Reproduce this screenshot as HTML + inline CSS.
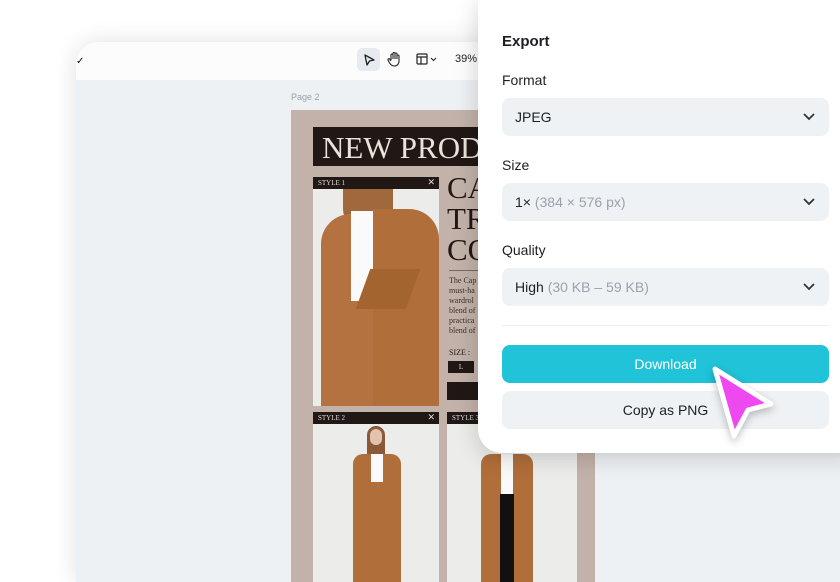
<!DOCTYPE html>
<html><head><style>
*{margin:0;padding:0;box-sizing:border-box}
body{width:840px;height:560px;overflow:hidden;background:#fff;font-family:"Liberation Sans",sans-serif;position:relative}
.win{position:absolute;left:76px;top:42px;width:800px;height:540px;border-radius:22px 0 0 0;background:#eef1f4;box-shadow:0 0 24px rgba(0,0,0,.12);overflow:hidden}
.tb{position:absolute;left:0;top:0;right:0;height:38px;background:#fcfcfc}
.serif{font-family:"Liberation Serif",serif}
.page{position:absolute;left:215px;top:68px;width:304px;height:480px;background:#c2b2a9}
.blk{position:absolute;background:#211815}
.ph{position:absolute;background:#ececea;overflow:hidden}
.panel{position:absolute;left:478px;top:0;width:380px;height:453px;background:#fff;border-radius:0 0 0 24px;box-shadow:0 4px 24px rgba(0,0,0,.18)}
.lbl{position:absolute;left:24px;font-size:14px;color:#1d1f24}
.sel{position:absolute;left:24px;width:327px;height:38px;border-radius:8px;background:#eff2f5;font-size:14px;color:#1d1f24;padding:11px 0 0 13px}
.sel i{font-style:normal;color:#9aa2ad}
.chev{position:absolute;right:14px;top:15px}
.btn{position:absolute;left:24px;width:327px;height:38px;border-radius:8px;font-size:14px;text-align:center;line-height:38px}
</style></head><body>
<div class="win">
 <div class="tb">
  <div style="position:absolute;left:0;top:14px;font-size:10px">✓</div>
  <div style="position:absolute;left:281px;top:6px;width:23px;height:23px;border-radius:5px;background:#e7eaee"></div>
  <svg style="position:absolute;left:286px;top:11px" width="14" height="14" viewBox="0 0 14 14"><path d="M3 2 L12 7 L7.5 8 L5 12 Z" fill="none" stroke="#222" stroke-width="1.3" stroke-linejoin="round"/></svg>
  <svg style="position:absolute;left:311px;top:9px" width="14" height="16" viewBox="0 0 14 16"><path d="M4 9V4a1 1 0 012 0V8M6 8V2.5a1 1 0 012 0V8M8 8V3a1 1 0 012 0v5M10 8V5a1 1 0 012 0v5c0 3-2 5-4.5 5S3 13 2 11l-1-2a1 1 0 012-.5L4 10" fill="none" stroke="#222" stroke-width="1.1"/></svg>
  <svg style="position:absolute;left:340px;top:11px" width="24" height="13" viewBox="0 0 24 13"><rect x="1" y="1" width="10" height="10" rx="1" fill="none" stroke="#222" stroke-width="1.2"/><path d="M1 4H11M5 4V11" stroke="#222" stroke-width="1.2"/><path d="M15 5l2.5 2.5L20 5" fill="none" stroke="#222" stroke-width="1.1"/></svg>
  <div style="position:absolute;left:379px;top:11px;font-size:11px;color:#222">39%</div>
 </div>
 <div style="position:absolute;left:215px;top:50px;font-size:9px;color:#9aa2ad">Page 2</div>
 <div class="page">
  <div class="blk" style="left:22px;top:17px;width:290px;height:39px"><div class="serif" style="color:#ebe2dc;font-size:31px;padding:3px 0 0 9px;white-space:nowrap">NEW PRODUCT</div></div>
  <div class="blk" style="left:22px;top:67px;width:126px;height:12px"><span class="serif" style="color:#ddd;font-size:7px;position:absolute;left:5px;top:2px">STYLE 1</span><span style="color:#ddd;font-size:9px;position:absolute;right:4px;top:0">✕</span></div>
  <div class="ph" style="left:22px;top:79px;width:126px;height:217px">
   <div style="position:absolute;left:30px;top:-5px;width:50px;height:45px;background:#a0683c;border-radius:0 0 20px 20px"></div>
   <div style="position:absolute;left:8px;top:25px;width:60px;height:200px;background:#b3723f;border-radius:30px 0 0 0"></div>
   <div style="position:absolute;left:60px;top:20px;width:66px;height:200px;background:#b06e3a;border-radius:0 30px 0 0"></div>
   <div style="position:absolute;left:38px;top:22px;width:22px;height:90px;background:#fafafa"></div>
   <div style="position:absolute;left:50px;top:80px;width:50px;height:40px;background:#a4642f;transform:skewX(-20deg)"></div>
  </div>
  <div class="serif" style="position:absolute;left:156px;top:62px;font-size:31px;line-height:31px;color:#211815">CA<br>TR<br>CO</div>
  <div style="position:absolute;left:158px;top:160px;width:30px;height:1px;background:#7a6a62"></div>
  <div class="serif" style="position:absolute;left:158px;top:166px;font-size:8px;line-height:10px;color:#3a2e29">The Cap<br>must-ha<br>wardrol<br>blend of<br>practica<br>blend of</div>
  <div class="serif" style="position:absolute;left:158px;top:238px;font-size:8px;color:#211815">SIZE :</div>
  <div class="blk serif" style="left:157px;top:251px;width:26px;height:12px;color:#ddd;font-size:7px;text-align:center;line-height:12px">L</div>
  <div class="blk" style="left:156px;top:272px;width:40px;height:18px"></div>
  <div class="blk" style="left:22px;top:302px;width:126px;height:12px"><span class="serif" style="color:#ddd;font-size:7px;position:absolute;left:5px;top:2px">STYLE 2</span><span style="color:#ddd;font-size:9px;position:absolute;right:4px;top:0">✕</span></div>
  <div class="ph" style="left:22px;top:314px;width:126px;height:170px">
   <div style="position:absolute;left:54px;top:2px;width:18px;height:30px;background:#8a5a38;border-radius:9px 9px 0 0"></div>
   <div style="position:absolute;left:57px;top:5px;width:12px;height:16px;background:#e3c3ad;border-radius:6px"></div>
   <div style="position:absolute;left:40px;top:30px;width:48px;height:140px;background:#b06e3a;border-radius:10px 10px 0 0"></div>
   <div style="position:absolute;left:58px;top:30px;width:12px;height:28px;background:#fafafa"></div>
  </div>
  <div class="blk" style="left:156px;top:302px;width:130px;height:12px"><span class="serif" style="color:#ddd;font-size:7px;position:absolute;left:5px;top:2px">STYLE 3</span></div>
  <div class="ph" style="left:156px;top:314px;width:130px;height:170px">
   <div style="position:absolute;left:34px;top:30px;width:52px;height:140px;background:#b06e3a;border-radius:10px 10px 0 0"></div>
   <div style="position:absolute;left:54px;top:30px;width:12px;height:40px;background:#fafafa"></div>
   <div style="position:absolute;left:53px;top:70px;width:14px;height:100px;background:#111"></div>
  </div>
 </div>
</div>
<div class="panel">
 <div class="lbl" style="top:33px;font-weight:bold;font-size:15px">Export</div>
 <div class="lbl" style="top:72px">Format</div>
 <div class="sel" style="top:98px">JPEG<svg class="chev" width="12" height="8" viewBox="0 0 12 8"><path d="M1 1l5 5 5-5" fill="none" stroke="#333" stroke-width="1.8"/></svg></div>
 <div class="lbl" style="top:157px">Size</div>
 <div class="sel" style="top:183px">1× <i>(384 × 576 px)</i><svg class="chev" width="12" height="8" viewBox="0 0 12 8"><path d="M1 1l5 5 5-5" fill="none" stroke="#333" stroke-width="1.8"/></svg></div>
 <div class="lbl" style="top:242px">Quality</div>
 <div class="sel" style="top:268px">High <i>(30 KB – 59 KB)</i><svg class="chev" width="12" height="8" viewBox="0 0 12 8"><path d="M1 1l5 5 5-5" fill="none" stroke="#333" stroke-width="1.8"/></svg></div>
 <div style="position:absolute;left:24px;top:325px;width:327px;height:1px;background:#eceef1"></div>
 <div class="btn" style="top:345px;background:#20c3d8;color:#fff">Download</div>
 <div class="btn" style="top:391px;background:#eff2f5;color:#1d1f24">Copy as PNG</div>
</div>
<svg style="position:absolute;left:704px;top:360px;filter:drop-shadow(0 3px 4px rgba(0,0,0,.25))" width="80" height="84" viewBox="0 0 80 84"><path d="M11 9 L67 44 L44 50 L30 76 Z" fill="#ee48f0" stroke="#fff" stroke-width="5" stroke-linejoin="round"/></svg>
</body></html>
